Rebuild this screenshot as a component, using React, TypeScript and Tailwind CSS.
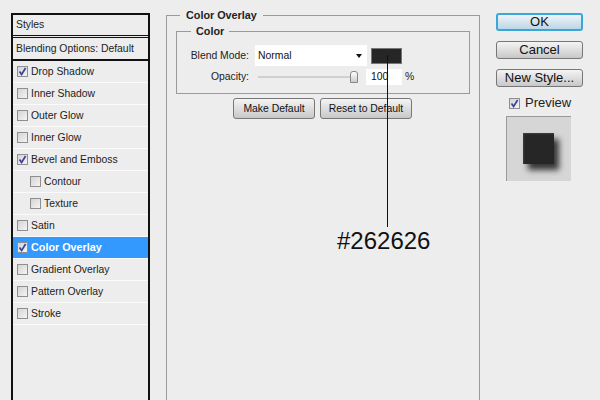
const rows = [
  { label: 'Drop Shadow', checked: true },
  { label: 'Inner Shadow' },
  { label: 'Outer Glow' },
  { label: 'Inner Glow' },
  { label: 'Bevel and Emboss', checked: true },
  { label: 'Contour', sub: true },
  { label: 'Texture', sub: true },
  { label: 'Satin' },
  { label: 'Color Overlay', checked: true, active: true },
  { label: 'Gradient Overlay' },
  { label: 'Pattern Overlay' },
  { label: 'Stroke' },
];

function Check({ checked }: { checked?: boolean }) {
  return (
    <span className="flex h-[11px] w-[11px] shrink-0 items-center justify-center border border-[#8f8f8f] bg-gradient-to-br from-[#d4d4d4] to-[#f4f4f4]">
      {checked && (
        <svg width="9" height="9" viewBox="0 0 9 9" fill="none">
          <path d="M1.5 4.5 L3.6 7.4 L7.6 1" stroke="#3c3f9c" strokeWidth="1.7" />
        </svg>
      )}
    </span>
  );
}

function Btn({ children, className }: { children: string; className: string }) {
  return (
    <button className={`flex items-center justify-center rounded-[3px] border border-[#777] bg-gradient-to-b from-[#f4f4f4] to-[#c8c8c8] text-[#111] ${className}`}>
      {children}
    </button>
  );
}

export default function App() {
  return (
    <div className="relative flex h-[400px] w-[600px] overflow-hidden bg-[#ededed] pl-[11px] pt-[13px] font-['Liberation_Sans',sans-serif] text-[10.4px] text-[#222]">
      {/* styles list */}
      <div className="h-[400px] w-[139px] shrink-0 border-x-2 border-t-2 border-[#111]">
        <div className="flex h-[23px] items-center border-b-[3px] border-double border-[#111] pl-[3px]">Styles</div>
        <div className="flex h-[23px] items-center border-b-2 border-[#111] pl-[3px]">Blending Options: Default</div>
        {rows.map((r) => (
          <div
            key={r.label}
            className={`flex h-[22px] items-center gap-[3px] border-b border-[#fafafa] ${r.sub ? 'pl-[17px]' : 'pl-[4px]'} ${r.active ? 'bg-[#3399ff] text-[10.8px] font-bold text-white' : ''}`}
          >
            <Check checked={r.checked} />
            {r.label}
          </div>
        ))}
      </div>

      {/* main panel */}
      <div className="-mt-[4px] ml-[16px] w-[314px] shrink-0">
        <fieldset className="h-[404px] border border-[#9a9a9a] px-[9px] pb-0">
          <legend className="ml-[4px] px-[6px] text-[10.8px] font-bold leading-[13px]">Color Overlay</legend>
          <fieldset className="mt-[3px] h-[69px] border border-[#9a9a9a] pt-[7px]">
            <legend className="ml-[14px] px-[5px] text-[10.8px] font-bold leading-[13px]">Color</legend>
            <div className="flex h-[21px] items-center">
              <span className="w-[72px] text-right">Blend Mode:</span>
              <div className="ml-[6px] flex h-[21px] w-[112px] items-center justify-between bg-white pl-[3px] pr-[5px] text-[#111]">
                Normal
                <span className="h-0 w-0 border-x-[3.5px] border-t-[4px] border-x-transparent border-t-[#111]" />
              </div>
              <span className="ml-[4px] h-[16px] w-[31px] border border-[#777] bg-[#262626]" />
            </div>
            <div className="mt-[2px] flex h-[17px] items-center">
              <span className="w-[72px] text-right">Opacity:</span>
              <div className="relative ml-[9px] h-[2px] w-[98px] bg-[#d0d0d0]">
                <span className="absolute -top-[5px] right-[-2px] h-[12px] w-[8px] rounded-t-[3px] border border-[#888] bg-gradient-to-b from-[#fff] to-[#ccc]" />
              </div>
              <div className="ml-[10px] flex h-[16px] w-[36px] items-center bg-white pl-[5px] text-[#111]">100</div>
              <span className="ml-[3px]">%</span>
            </div>
          </fieldset>
          <div className="mt-[4px] flex justify-center gap-[5px] pr-[1px]">
            <Btn className="h-[21px] w-[82px]">Make Default</Btn>
            <Btn className="h-[21px] w-[92px]">Reset to Default</Btn>
          </div>
        </fieldset>
      </div>

      {/* right column */}
      <div className="ml-[16px] flex w-[87px] shrink-0 flex-col text-[13px]">
        <button className="flex h-[18px] items-center justify-center rounded-[3px] border-2 border-[#3aa7d8] bg-gradient-to-b from-[#eef4f8] to-[#bcd6e6] text-[#111]">OK</button>
        <Btn className="mt-[10px] h-[18px]">Cancel</Btn>
        <Btn className="mt-[10px] h-[18px]">New Style...</Btn>
        <div className="mt-[6px] flex h-[20px] items-center gap-[5px] pl-[13px]">
          <Check checked />
          Preview
        </div>
        <div className="ml-[10px] mt-[3px] flex h-[65px] w-[65px] items-center justify-center border-l border-t border-[#9a9a9a] bg-[#d6d6d6] pb-[2px] pr-[1px]">
          <div className="h-[31px] w-[31px] bg-[#262626] shadow-[5px_6px_6px_rgba(0,0,0,0.75),inset_1px_1px_2px_rgba(255,255,255,0.12)]" />
        </div>
      </div>

      {/* annotation */}
      <div className="absolute left-[387px] top-[55px] h-[172px] w-px bg-[#111]" />
      <div className="absolute left-[337px] top-[227px] font-['Liberation_Sans',sans-serif] text-[24px] leading-[28px] text-[#111]">#262626</div>
    </div>
  );
}
